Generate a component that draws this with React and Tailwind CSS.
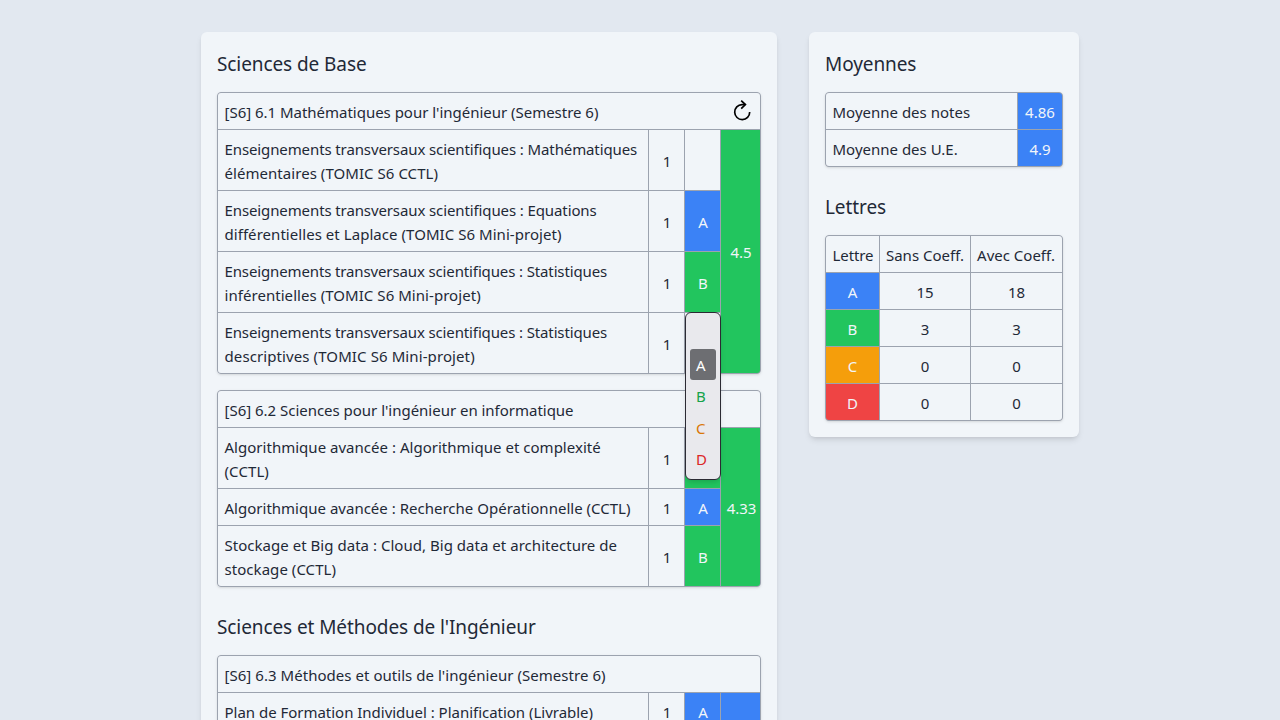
const tones = {
  A: "bg-[#3b82f6] text-slate-100",
  B: "bg-[#22c55e] text-slate-100",
  C: "bg-[#f59e0b] text-slate-100",
  D: "bg-[#ef4444] text-slate-100",
  "": "bg-[#f1f5f9]",
};

const panel = "rounded-md bg-[#f1f5f9] p-4 shadow-md";
const frame = "grid gap-px overflow-hidden rounded-[4px] border border-[#9ca3af] bg-[#9ca3af]";
const cell = "bg-[#f1f5f9] pt-[7px] pr-[5.5px] pb-[5px] pl-[6.5px] whitespace-nowrap";
const tight = "tracking-[-0.11px]";
const loose = "tracking-[0.05px]";

function Heading({ children, className = "" }) {
  return <h2 className={`mb-3 text-[19px] leading-8 tracking-[-0.09px] ${className}`}>{children}</h2>;
}

function ReloadIcon() {
  return (
    <svg className="-mt-0.5 mr-[1px] size-6" viewBox="0 0 24 24" fill="none" stroke="#000" strokeWidth="1.7">
      <path d="M15.2 5.6H12a7.5 7.5 0 1 0 7.7 7.4" />
      <path d="M11.2 1.7 15.4 5.6 11.2 9.7" />
    </svg>
  );
}

function GradeMenu() {
  return (
    <ul className="absolute top-[-1px] left-0 z-10 flex h-[168px] w-9 flex-col gap-[0.5px] rounded-[6px] border border-[#2b2a33] bg-[#e9e9ed] px-1 pt-1 shadow-md">
      <li className="h-[31px]" />
      <li className="h-[31px] rounded-[3px] bg-[#6d6e72] pl-1.5 leading-[32px] text-white">A</li>
      <li className="h-[31px] pl-1.5 leading-[32px] text-[#16a34a]">B</li>
      <li className="h-[31px] pl-1.5 leading-[32px] text-[#d97706]">C</li>
      <li className="h-[31px] pl-1.5 leading-[32px] text-[#dc2626]">D</li>
    </ul>
  );
}

function Unit({ title, titleTrack = "", average, tone, rows, reload }) {
  return (
    <div className="rounded-[4px] shadow-sm">
      <div className="relative">
        <div className={`${frame} grid-cols-[430px_35px_35px_39px]`}>
          <div className={`${cell} col-span-4 flex h-9 items-center justify-between`}>
            <span className={titleTrack}>{title}</span>
            {reload && <ReloadIcon />}
          </div>
          <div className="col-span-3 grid grid-cols-[430px_35px_35px] gap-px">
            {rows.map((row, i) => (
              <div key={i} className="col-span-3 grid grid-cols-subgrid">
                <div className={cell}>
                  {row.lines.map(([text, track], j) => (
                    <div key={j} className={track}>{text}</div>
                  ))}
                </div>
                <div className={`${cell} grid place-items-center`}>1</div>
                <div className={`grid place-items-center pt-0.5 pl-px ${tones[row.grade]}`}>
                  {!row.covered && row.grade}
                </div>
              </div>
            ))}
          </div>
          <div className={`grid place-items-center pt-px tracking-[-0.1px] ${reload ? "pl-px" : "pl-0.5"} ${tones[tone]}`}>
            {average}
          </div>
        </div>
        {reload && (
          <div className="absolute top-[221px] left-[468px]">
            <GradeMenu />
          </div>
        )}
      </div>
    </div>
  );
}

const math = [
  { grade: "", lines: [["Enseignements transversaux scientifiques : Mathématiques", tight], ["élémentaires (TOMIC S6 CCTL)", loose]] },
  { grade: "A", lines: [["Enseignements transversaux scientifiques : Equations", tight], ["différentielles et Laplace (TOMIC S6 Mini-projet)", loose]] },
  { grade: "B", lines: [["Enseignements transversaux scientifiques : Statistiques", "tracking-[-0.13px]"], ["inférentielles (TOMIC S6 Mini-projet)", loose]] },
  { grade: "", lines: [["Enseignements transversaux scientifiques : Statistiques", "tracking-[-0.13px]"], ["descriptives (TOMIC S6 Mini-projet)", "tracking-[0.1px]"]] },
];

const computing = [
  { grade: "B", covered: true, lines: [["Algorithmique avancée : Algorithmique et complexité", "tracking-[0.02px]"], ["(CCTL)", "tracking-[0.1px]"]] },
  { grade: "A", lines: [["Algorithmique avancée : Recherche Opérationnelle (CCTL)", "tracking-[0.01px]"]] },
  { grade: "B", lines: [["Stockage et Big data : Cloud, Big data et architecture de", "tracking-[0.03px]"], ["stockage (CCTL)", loose]] },
];

const methods = [
  { grade: "A", lines: [["Plan de Formation Individuel : Planification (Livrable)", "tracking-[-0.02px]"]] },
];

const letters = [
  ["A", 15, 18],
  ["B", 3, 3],
  ["C", 0, 0],
  ["D", 0, 0],
];

export default function App() {
  return (
    <main className="flex h-screen items-start justify-center gap-8 overflow-hidden bg-[#e2e8f0] pt-8 font-['Noto_Sans',sans-serif] text-[15px] leading-6 text-[#1f2937]">
      <section className={`${panel} w-[576px] shrink-0`}>
        <Heading>Sciences de Base</Heading>
        <div className="flex flex-col gap-4">
          <Unit title="[S6] 6.1 Mathématiques pour l'ingénieur (Semestre 6)" titleTrack="tracking-[-0.02px]" average="4.5" tone="B" rows={math} reload />
          <Unit title="[S6] 6.2 Sciences pour l'ingénieur en informatique" titleTrack="tracking-[-0.02px]" average="4.33" tone="B" rows={computing} />
        </div>
        <Heading className="mt-6">Sciences et Méthodes de l'Ingénieur</Heading>
        <Unit title="[S6] 6.3 Méthodes et outils de l'ingénieur (Semestre 6)" titleTrack="tracking-[0.04px]" average="" tone="A" rows={methods} />
      </section>

      <aside className={`${panel} w-[270px] shrink-0`}>
        <Heading>Moyennes</Heading>
        <div className={`${frame} grid-cols-[191px_44px] shadow-sm`}>
          <div className={cell}>Moyenne des notes</div>
          <div className={`grid place-items-center pt-0.5 ${tones.A}`}>4.86</div>
          <div className={cell}>Moyenne des U.E.</div>
          <div className={`grid place-items-center pt-0.5 ${tones.A}`}>4.9</div>
        </div>
        <Heading className="mt-6">Lettres</Heading>
        <div className={`${frame} grid-cols-[53px_90px_91px] text-center shadow-sm`}>
          <div className={`${cell} tracking-[-0.1px]`}>Lettre</div>
          <div className="bg-[#f1f5f9] pt-[7px] pb-[5px] whitespace-nowrap">Sans Coeff.</div>
          <div className="bg-[#f1f5f9] pt-[7px] pr-px pb-[5px] whitespace-nowrap">Avec Coeff.</div>
          {letters.map(([letter, plain, weighted]) => (
            <div key={letter} className="contents">
              <div className={`pt-[7px] pb-[5px] ${tones[letter]}`}>{letter}</div>
              <div className="bg-[#f1f5f9] pt-[7px] pb-[5px]">{plain}</div>
              <div className="bg-[#f1f5f9] pt-[7px] pb-[5px]">{weighted}</div>
            </div>
          ))}
        </div>
      </aside>
    </main>
  );
}
